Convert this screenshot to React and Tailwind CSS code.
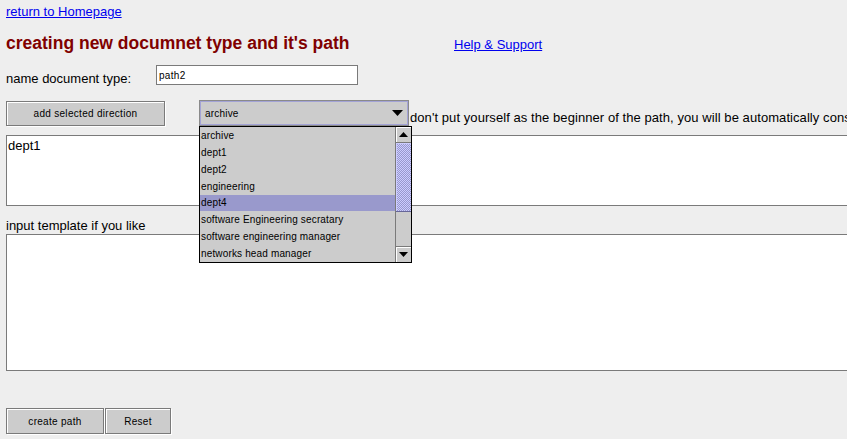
import React from "react";

const items = [
  "archive",
  "dept1",
  "dept2",
  "engineering",
  "dept4",
  "software Engineering secratary",
  "software engineering manager",
  "networks head manager",
];

function Down({ w = 11, h = 6 }) {
  return (
    <svg width={w} height={h} viewBox={`0 0 ${w} ${h}`}>
      <polygon points={`0,0 ${w},0 ${w / 2},${h}`} fill="#000" />
    </svg>
  );
}
function Up({ w = 9, h = 5 }) {
  return (
    <svg width={w} height={h} viewBox={`0 0 ${w} ${h}`}>
      <polygon points={`0,${h} ${w},${h} ${w / 2},0`} fill="#000" />
    </svg>
  );
}

function JButton({ children, className }) {
  return (
    <div
      className={
        "flex items-center justify-center bg-[#cccccc] border border-[#7a7a7a] shadow-[inset_1px_1px_0_#ffffff,1px_1px_0_#ffffff] text-[10px] tracking-[0.3px] text-black " +
        className
      }
    >
      {children}
    </div>
  );
}

export default function App() {
  return (
    <div className="relative w-[847px] h-[439px] overflow-hidden bg-[#eeeeee] text-black font-['Liberation_Sans',Arial,sans-serif]">
      <div className="pt-[4px] pl-[6px] text-[13px] leading-[16px]">
        <a className="text-[#0000ee] underline">return to Homepage</a>
      </div>

      <div className="mt-[13px] pl-[6px] flex items-baseline">
        <h1 className="w-[448px] shrink-0 text-[17.5px] leading-[20px] font-bold text-[#800000]">
          creating new documnet type and it's path
        </h1>
        <a className="text-[13px] leading-[16px] text-[#0000ee] underline">Help &amp; Support</a>
      </div>

      <div className="mt-[12px] pl-[6px] flex items-start">
        <div className="w-[150px] shrink-0 mt-[6px] text-[13px] leading-[16px]">name document type:</div>
        <div className="w-[202px] h-[20px] bg-white border border-[#7a7a7a] flex items-center pl-[2px] text-[10px] tracking-[0.3px]">
          path2
        </div>
      </div>

      <div className="mt-[13px] pl-[6px] flex items-end">
        <JButton className="w-[159px] h-[25px] shrink-0">add selected direction</JButton>
        <div className="ml-[34px] w-[210px] h-[26px] shrink-0 border border-[#8a8a8a] bg-[#cccccc] shadow-[inset_0_0_0_1px_#a3a3d6] flex items-center pl-[5px] pr-[5px] text-[10px] tracking-[0.2px]">
          <span className="flex-1">archive</span>
          <Down />
        </div>
        <div className="ml-[1px] shrink-0 whitespace-nowrap text-[13px] leading-[16px] tracking-[0.07px]">
          don't put yourself as the beginner of the path, you will be automatically considered
        </div>
      </div>

      <div className="mt-[9px] ml-[6px] w-[860px] h-[71px] bg-white border border-[#7a7a7a] pl-[1px] pt-[2px] text-[13px] leading-[16px]">
        dept1
      </div>

      <div className="mt-[12px] pl-[6px] text-[13px] leading-[16px]">input template if you like</div>
      <div className="ml-[6px] w-[860px] h-[137px] bg-white border border-[#7a7a7a]" />

      <div className="mt-[37px] pl-[6px] flex gap-[1px]">
        <JButton className="w-[98px] h-[26px]">create path</JButton>
        <JButton className="w-[66px] h-[26px]">Reset</JButton>
      </div>

      <div className="absolute left-[199px] top-[126px] w-[213px] h-[137px] border border-black bg-[#cccccc] flex">
        <div className="flex-1 flex flex-col">
          {items.map((t) => (
            <div
              key={t}
              className={
                "h-[17px] flex items-center pl-[1px] text-[10px] tracking-[0.15px] whitespace-nowrap " +
                (t === "dept4" ? "bg-[#9999cc]" : "")
              }
            >
              {t}
            </div>
          ))}
        </div>
        <div className="w-[16px] flex flex-col border-l border-[#7a7a7a]">
          <div className="h-[16px] flex items-center justify-center bg-[#cccccc] border-b border-[#7a7a7a] shadow-[inset_1px_1px_0_#ffffff]">
            <Up />
          </div>
          <div className="h-[69px] bg-[#9999cc] border-b border-[#666699] bg-[repeating-conic-gradient(#ccccff_0_25%,#9999cc_0_50%)] bg-[length:2px_2px] shadow-[inset_1px_1px_0_#ccccff]" />
          <div className="flex-1 bg-[#cccccc]" />
          <div className="h-[16px] flex items-center justify-center bg-[#cccccc] border-t border-[#7a7a7a] shadow-[inset_1px_1px_0_#ffffff]">
            <Down w={9} h={5} />
          </div>
        </div>
      </div>
    </div>
  );
}
